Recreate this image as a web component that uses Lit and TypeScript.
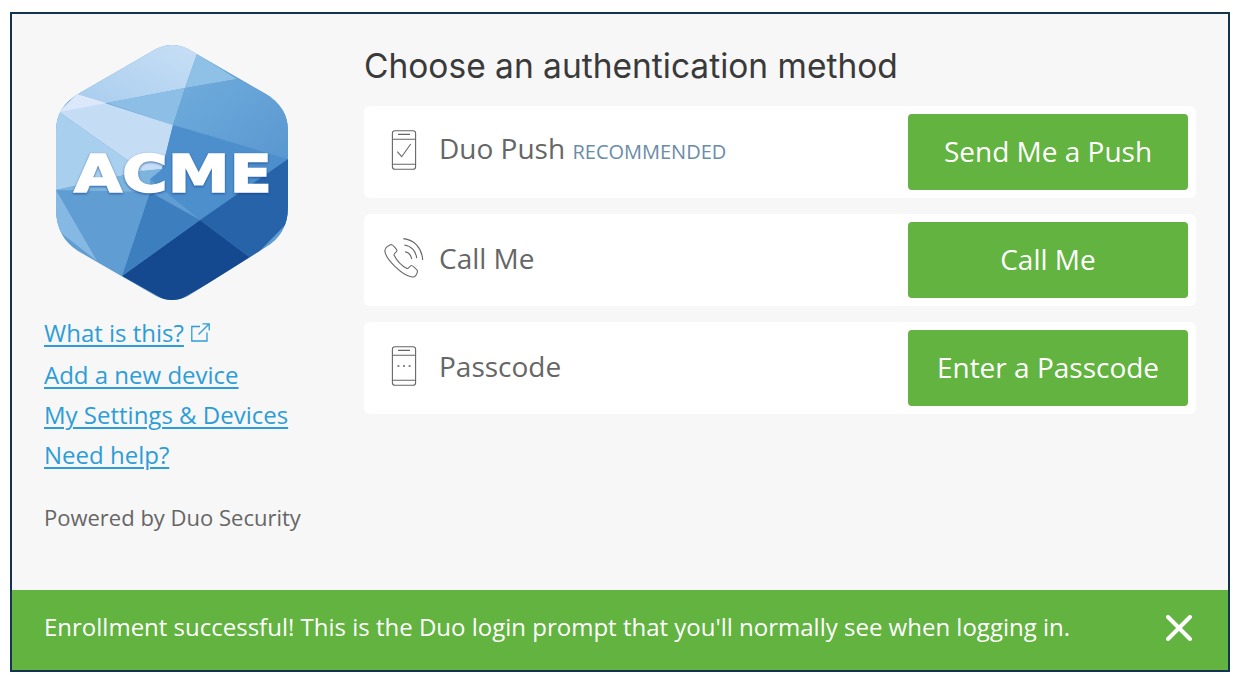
import { LitElement, html, css, svg } from "lit";
import { customElement } from "lit/decorators.js";

const facets: [string, string][] = [
  ["47,16 142,10 167,25 155,59 77,74 47,65", "url(#fa)"],
  ["167,25 207,50 155,59", "#8fc1e7"],
  ["77,74 155,59 143,96", "#8dbfe6"],
  ["155,59 207,50 240,67 258,87 258,130 143,96", "url(#fb)"],
  ["29,83 47,65 143,96 132,140 113,142", "#c5dcf5"],
  ["47,65 77,74 29,83", "#dbe8fb"],
  ["26,87 29,83 113,142 26,161", "#a9cfee"],
  ["143,96 258,130 170,191 120,150 132,140", "#4d8fcc"],
  ["258,130 258,193 222,230 170,191", "#2763a8"],
  ["170,191 222,230 142,275 92,247", "#15498f"],
  ["120,163 170,191 92,247", "#3d7fbe"],
  ["26,161 120,163 92,247 67,232", "#5f9dd2"],
  ["26,161 67,232 26,200", "#85b9e3"],
  ["113,142 132,140 120,150 120,163 26,161", "#7db4de"],
];

const phone = (inner: unknown) => svg`<svg class="ic" viewBox="0 0 40 40" width="40" height="40" fill="none" stroke="#666" stroke-width="1.1">
  <rect x="8.4" y=".7" width="23.2" height="38.6" rx="2.6"></rect>
  <path d="M8.4 9.3H31.6M8.4 34.3H31.6M14 4.4H26"></path>${inner}</svg>`;

const pushIcon = phone(svg`<path d="M13.3 21.7L17.7 26.7L26.7 14"></path>`);
const codeIcon = phone(svg`<path d="M13.4 20H15.4M19 20H21M24.6 20H26.6" stroke-width="1.6"></path>`);
const callIcon = svg`<svg class="ic" viewBox="0 0 40 40" width="40" height="40" fill="none" stroke="#666" stroke-width="1.1">
  <path d="M7.5 6.5C5 7 1 9.5.8 12.5C1 20 17 37 28 39C31 39.5 33.5 36 33.5 33C33.5 32 28.5 27.5 27.5 27.5C26 27.5 24.5 31 23 30.5C18 28 12.5 22 10 17C9.5 15.5 13 14 13 12.5C13 11.5 8.5 6.5 7.5 6.5Z"></path>
  <path d="M19.3.6C30 1.5 38 10 38.7 22M20.3 7C27 7.8 32 13 32.7 20.3M21 13.7C24.5 14.3 27 17 27.7 21"></path></svg>`;

@customElement("app-root")
export class AppRoot extends LitElement {
  static styles = css`
    :host { display: block; width: 1240px; height: 680px; box-sizing: border-box; padding: 12px 10px 8px; background: #fff; font-family: "Open Sans", sans-serif; }
    .frame { box-sizing: border-box; height: 660px; border: 2px solid #12344f; background: #f7f7f7; display: flex; flex-direction: column; }
    .main { flex: 1; display: flex; min-height: 0; }
    .side { width: 352px; box-sizing: border-box; padding: 31px 0 0 32px; flex: none; display: flex; flex-direction: column; }
    .logo { display: block; width: 290px; height: 290px; margin: -16px 0 0 -14px; }
    .acme { font-family: "DejaVu Sans", sans-serif; font-weight: 700; font-size: 52px; fill: #fff; stroke: #fff; stroke-width: 1.6px; filter: drop-shadow(0 1px 1px rgba(12,60,140,.7)); }
    .links { display: flex; flex-direction: column; font-size: 24px; line-height: 40px; margin-top: -8px; }
    .links div { display: flex; align-items: center; height: 40px; }
    .links div:first-child { height: 44px; }
    a { color: #2d9dd8; text-decoration: underline; text-decoration-thickness: 2px; text-underline-offset: 3px; }
    .ext { margin: -2px 0 0 7px; }
    .powered { font-size: 22px; color: #666; margin-top: 27px; line-height: 30px; }
    .content { flex: 1; padding: 28px 32px 0 0; min-width: 0; }
    h1 { margin: 0 0 16px; font-family: Inter, sans-serif; font-weight: 400; font-size: 33.5px; line-height: 48px; color: #3a3a3a; }
    .rows { display: flex; flex-direction: column; gap: 16px; }
    .row { height: 92px; box-sizing: border-box; background: #fff; border-radius: 6px; padding: 8px; display: flex; align-items: center; justify-content: space-between; }
    .lbl { display: flex; align-items: center; gap: 15px; padding: 0 0 4px 12px; }
    .ic { display: block; flex: none; }
    .name { font-size: 28px; color: #666; line-height: 40px; }
    .rec { font-size: 20px; color: #6a8ca8; }
    button { width: 280px; height: 76px; border: 0; border-radius: 4px; background: #62b33f; color: #fff; font: 400 28px "Open Sans", sans-serif; padding: 0 0 2px; }
    .banner { height: 80px; box-sizing: border-box; flex: none; background: #62b33f; color: #fff; display: flex; align-items: center; justify-content: space-between; padding: 0 36px 4px 32px; font-size: 24px; }
    .banner span { padding-bottom: 4px; }
  `;

  render() {
    return html`<div class="frame">
      <div class="main">
        <div class="side">
          <svg class="logo" viewBox="0 0 290 290">
            <defs>
              <clipPath id="hex"><path d="M126 20Q142 12 158 20L236 65Q258 78 258 102V178Q258 205 236 218L158 267Q142 275 126 267L48 222Q26 208 26 180V102Q26 78 48 65Z"></path></clipPath>
              <linearGradient id="fa" x1="0" y1="1" x2="1" y2="0"><stop offset="0" stop-color="#a9cdee"></stop><stop offset="1" stop-color="#c9e0f6"></stop></linearGradient>
              <linearGradient id="fb" x1="0" y1="0" x2="1" y2="1"><stop offset="0" stop-color="#70acdc"></stop><stop offset="1" stop-color="#5997d0"></stop></linearGradient>
            </defs>
            <g clip-path="url(#hex)">
              <rect x="20" y="10" width="245" height="270" fill="#5f9dd2"></rect>
              ${facets.map(([p, f]) => svg`<polygon points=${p} fill=${f}></polygon>`)}
            </g>
            <text class="acme" x="44" y="163" textLength="198" lengthAdjust="spacingAndGlyphs">ACME</text>
          </svg>
          <div class="links">
            <div><a href="#">What is this?</a><svg class="ext" width="19" height="19" viewBox="0 0 19 19" fill="none" stroke="#2d9dd8" stroke-width="1.3"><path d="M9 3.5H.8V18H16V9.5M7.5 11.5L18 1M11.5.8H18.2V7.5"></path></svg></div>
            <div><a href="#">Add a new device</a></div>
            <div><a href="#">My Settings &amp; Devices</a></div>
            <div><a href="#">Need help?</a></div>
          </div>
          <div class="powered">Powered by Duo Security</div>
        </div>
        <div class="content">
          <h1>Choose an authentication method</h1>
          <div class="rows">
            <div class="row"><div class="lbl">${pushIcon}<span class="name">Duo Push <span class="rec">RECOMMENDED</span></span></div><button>Send Me a Push</button></div>
            <div class="row"><div class="lbl">${callIcon}<span class="name">Call Me</span></div><button>Call Me</button></div>
            <div class="row"><div class="lbl">${codeIcon}<span class="name">Passcode</span></div><button>Enter a Passcode</button></div>
          </div>
        </div>
      </div>
      <div class="banner"><span>Enrollment successful! This is the Duo login prompt that you'll normally see when logging in.</span>
        <svg width="26" height="26" viewBox="0 0 26 26" stroke="#fff" stroke-width="4" stroke-linecap="round"><path d="M2 2L24 24M24 2L2 24"></path></svg></div>
    </div>`;
  }
}
